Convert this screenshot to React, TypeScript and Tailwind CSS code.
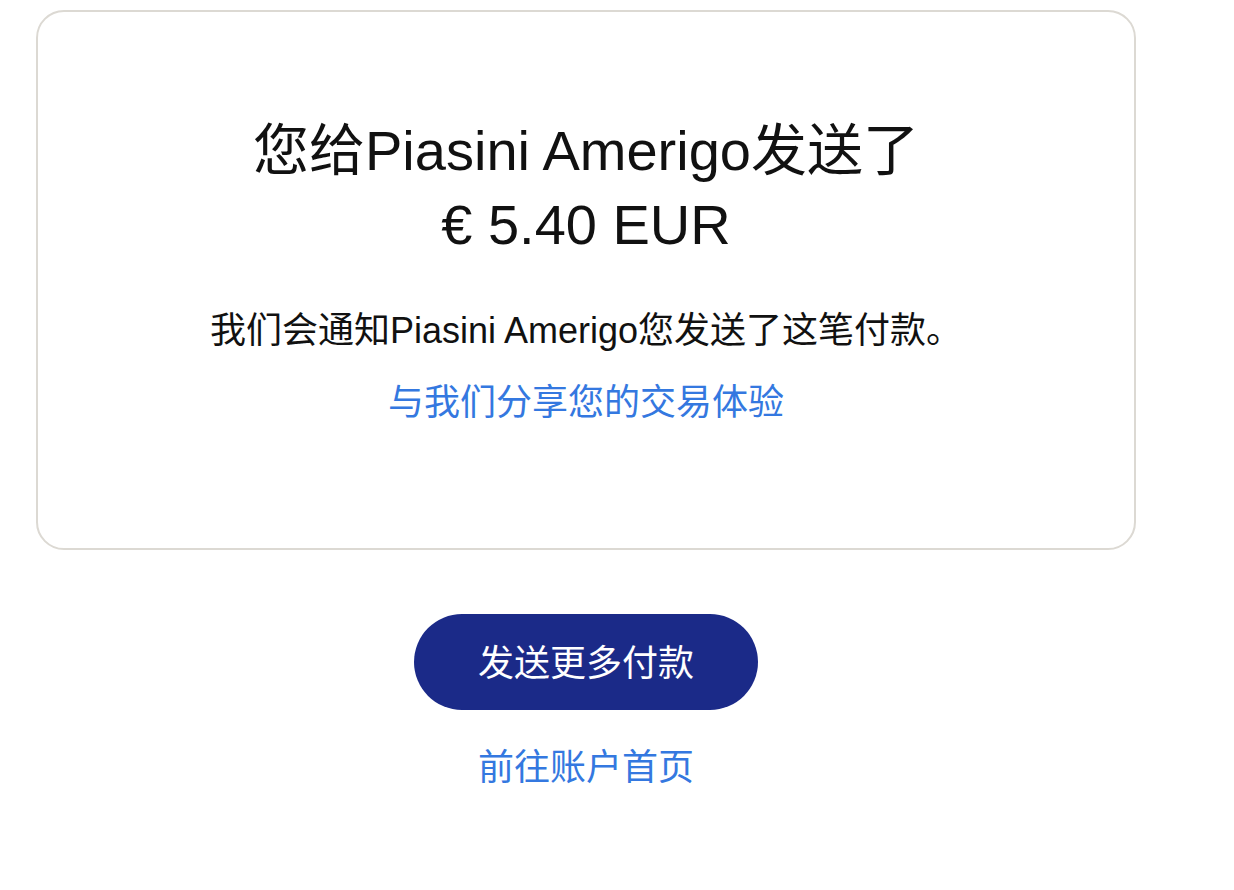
import React from "react";

export default function App() {
  return (
    <div
      className="min-h-[890px] w-full bg-white text-[#111111]"
      style={{ fontFamily: '"Liberation Sans", "Noto Sans CJK SC", sans-serif' }}
    >
      <div className="pl-[36px] pt-[10px]">
        <div className="w-[1100px] h-[540px] rounded-[28px] border-2 border-[#dcd9d3] flex flex-col items-center pt-[102px]">
          <h1 className="text-[56px] leading-[74px] font-normal text-center">
            您给Piasini Amerigo发送了
            <br />€ 5.40 EUR
          </h1>
          <p className="mt-[42px] text-[36px] leading-[54px] text-center">
            我们会通知Piasini Amerigo您发送了这笔付款。
          </p>
          <a className="mt-[18px] text-[36px] leading-[54px] text-[#3478e0] cursor-pointer">
            与我们分享您的交易体验
          </a>
        </div>
      </div>
      <div className="w-[1172px] flex flex-col items-center">
        <button className="mt-[64px] h-[96px] w-[344px] pt-[4px] rounded-full bg-[#1b2a88] text-white text-[36px] leading-[54px]">
          发送更多付款
        </button>
        <a className="mt-[31px] text-[36px] leading-[54px] text-[#3478e0] cursor-pointer">
          前往账户首页
        </a>
      </div>
    </div>
  );
}
